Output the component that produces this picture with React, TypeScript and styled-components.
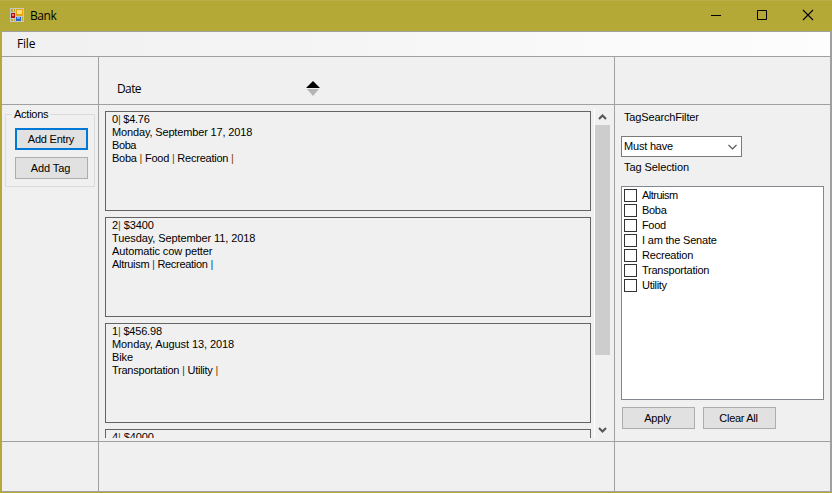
import React from 'react';
import styled, { createGlobalStyle } from 'styled-components';

const GlobalStyle = createGlobalStyle`
  * { box-sizing: border-box; }
  html, body { margin: 0; padding: 0; overflow: hidden; }
  button { font: inherit; color: inherit; }
`;

const Window = styled.div`
  width: 832px;
  height: 493px;
  display: flex;
  flex-direction: column;
  padding: 0 1px 1px;
  background: #b4a936;
  color: #000;
  font: 11px/13px "Liberation Sans", Arial, sans-serif;
  white-space: pre;
`;

const TitleBar = styled.header`
  height: 31px;
  margin: 0 -1px;
  flex: none;
  display: flex;
  align-items: center;
  padding: 0 1px 0 10px;
  border-top: 1px solid #b9ae48;
`;

const AppIconSvg = styled.svg`
  margin-bottom: 2px;
`;

const Title = styled.h1`
  margin: 0 auto 0 6px;
  font: 400 12px/16px "Open Sans", "Noto Sans", sans-serif;
  letter-spacing: -0.4px;
`;

const CaptionButton = styled.button`
  width: 46px;
  height: 30px;
  padding: 0;
  border: 0;
  background: none;
  display: flex;
  align-items: center;
  justify-content: center;
`;

const Client = styled.div`
  flex: 1;
  min-height: 0;
  display: flex;
  flex-direction: column;
  border: 1px solid #a0a0a0;
  background: #f0f0f0;
`;

const MenuBar = styled.nav`
  height: 24px;
  flex: none;
  padding: 4px 15px;
  background: linear-gradient(90deg, #f0f0f0, #fdfdfd);
  font: 12px/16px "Open Sans", "Noto Sans", sans-serif;
  letter-spacing: -0.2px;
`;

const Table = styled.main`
  flex: 1;
  min-height: 0;
  display: grid;
  grid-template-columns: 96px 515px 215px;
  grid-template-rows: 47px 336px 49px;
  gap: 1px;
  background: #a0a0a0;
  border-top: 1px solid #a0a0a0;
`;

const Cell = styled.section`
  min-width: 0;
  min-height: 0;
  background: #f0f0f0;
`;

const SortCell = styled(Cell)`
  display: flex;
  align-items: flex-start;
  padding: 24px 0 0 18px;
  font: 12px/16px "Open Sans", "Noto Sans", sans-serif;
`;

const SortLabel = styled.span`
  width: 189px;
  letter-spacing: -0.6px;
`;

const ActionsCell = styled(Cell)`
  padding: 3px 3px 0;
`;

const ActionsGroup = styled.fieldset`
  height: 79px;
  margin: 0;
  padding: 7px 7px 0 9px;
  border: 1px solid #dcdcdc;
  display: flex;
  flex-direction: column;
  gap: 7px;
  min-width: 0;

  legend {
    height: 13px;
    padding: 0 2px;
    margin-left: -3px;
    letter-spacing: -0.25px;
  }
`;

const Button = styled.button<{ $primary?: boolean }>`
  width: 73px;
  height: 22px;
  flex: none;
  padding: 0 ${(p) => (p.$primary ? 1 : 2)}px 0 0;
  background: #e1e1e1;
  border: ${(p) => (p.$primary ? '2px solid #0078d7' : '1px solid #adadad')};
`;

const Spaced = styled.span<{ $ls?: number }>`
  letter-spacing: ${(p) => p.$ls ?? 0}px;
`;

const EntriesCell = styled(Cell)`
  display: flex;
  padding: 3px 4px 3px 6px;
`;

const EntryList = styled.div`
  width: 489px;
  padding-top: 3px;
  overflow: hidden;
  display: flex;
  flex-direction: column;
  gap: 6px;
`;

const EntryCard = styled.article`
  width: 486px;
  height: 100px;
  flex: none;
  padding: 1px 6px;
  border: 1px solid #646464;
`;

const EntryLine = styled.div<{ $ls?: number }>`
  height: 13px;
  letter-spacing: ${(p) => p.$ls ?? 0}px;
`;

const Divider = styled.span<{ $warm: boolean }>`
  color: ${(p) => (p.$warm ? '#8a4200' : '#00508c')};
`;

const ScrollBar = styled.div`
  width: 16px;
  display: flex;
  flex-direction: column;
  align-items: center;
  justify-content: space-between;
  border-left: 1px solid #fff;
`;

const ScrollArrow = styled.div`
  height: 17px;
  display: flex;
  align-items: center;
`;

const ScrollTrack = styled.div`
  flex: 1;
  width: 15px;
`;

const ScrollThumb = styled.div`
  height: 230px;
  background: #cdcdcd;
`;

const FilterCell = styled(Cell)`
  padding: 6px 6px 0;
`;

const FieldLabel = styled.div`
  height: 13px;
  padding-left: 3px;
`;

const ComboBox = styled.div`
  width: 121px;
  height: 21px;
  margin: 12px 0 4px;
  padding: 0 4px 0 2px;
  display: flex;
  align-items: center;
  justify-content: space-between;
  background: #fff;
  border: 1px solid #7a7a7a;
`;

const TagList = styled.ul`
  width: 203px;
  height: 214px;
  margin: 12px 0 7px;
  padding: 1px 2px;
  list-style: none;
  background: #fff;
  border: 1px solid #828790;
`;

const TagItem = styled.li`
  height: 15px;
  display: flex;
  align-items: center;
  gap: 5px;
`;

const CheckBox = styled.span`
  width: 13px;
  height: 13px;
  border: 1px solid #333;
  background: #fff;
`;

const ButtonRow = styled.div`
  display: flex;
  gap: 8px;
  padding-left: 1px;
`;

type Line = { text: string; ls: number; warm?: boolean[] };

const entries: Line[][] = [
  [
    { text: '0| $4.76', ls: -0.25, warm: [true] },
    { text: 'Monday, September 17, 2018', ls: -0.15 },
    { text: 'Boba', ls: -0.4 },
    { text: 'Boba | Food | Recreation |', ls: -0.24, warm: [true, true, true] },
  ],
  [
    { text: '2| $3400', ls: -0.12, warm: [true] },
    { text: 'Tuesday, September 11, 2018', ls: -0.1 },
    { text: 'Automatic cow petter', ls: -0.12 },
    { text: 'Altruism | Recreation |', ls: -0.3, warm: [false, false] },
  ],
  [
    { text: '1| $456.98', ls: -0.2, warm: [true] },
    { text: 'Monday, August 13, 2018', ls: -0.08 },
    { text: 'Bike', ls: -0.1 },
    { text: 'Transportation | Utility |', ls: -0.24, warm: [false, true] },
  ],
  [{ text: '4| $4000', ls: -0.12, warm: [true] }],
];

const tags: Line[] = [
  { text: 'Altruism', ls: -0.5 },
  { text: 'Boba', ls: -0.3 },
  { text: 'Food', ls: -0.35 },
  { text: 'I am the Senate', ls: -0.2 },
  { text: 'Recreation', ls: -0.2 },
  { text: 'Transportation', ls: -0.24 },
  { text: 'Utility', ls: -0.3 },
];

const EntryText = ({ text, ls, warm = [] }: Line) => (
  <EntryLine $ls={ls}>
    {text.split('|').map((part, i) => (
      <React.Fragment key={i}>
        {i > 0 && <Divider $warm={warm[i - 1]}>|</Divider>}
        {part}
      </React.Fragment>
    ))}
  </EntryLine>
);

const AppIcon = () => (
  <AppIconSvg width="14" height="14" viewBox="0 0 14 14" shapeRendering="crispEdges">
    <path fill="#c9c9c4" d="M0 0h14v14H0z" />
    <path fill="#b4a936" d="M1 1h2v3H1zM4 1h1v3H4zM1 11h2v2H1zM4 11h1v2H4zM12 9h1v4h-1z" />
    <path fill="#b01116" d="M1 5h4v5H1z" />
    <path fill="#f27d72" d="M2 6h2v2H2z" />
    <path fill="#e8a317" d="M6 1h7v7H6z" />
    <path fill="#ffdf78" d="M7 2h5v4H7z" />
    <path fill="#2864cc" d="M6 9h5v4H6z" />
    <path fill="#76aaf5" d="M7 9h3v2H7z" />
  </AppIconSvg>
);

const Chevron = ({ up, wide }: { up?: boolean; wide?: boolean }) => (
  <svg width="9" height="6" viewBox="0 0 9 6" fill="none" stroke="#555" strokeWidth={wide ? 1.1 : 2}>
    <path d={up ? 'M1 5l3.5-3.5L8 5' : wide ? 'M.5 1l4 4 4-4' : 'M1 1l3.5 3.5L8 1'} />
  </svg>
);

export default function App() {
  return (
    <>
      <GlobalStyle />
      <Window>
        <TitleBar>
          <AppIcon />
          <Title>Bank</Title>
          <CaptionButton aria-label="Minimize">
            <svg width="10" height="10" shapeRendering="crispEdges"><path d="M0 4h10v1H0z" /></svg>
          </CaptionButton>
          <CaptionButton aria-label="Maximize">
            <svg width="10" height="10" viewBox="0 1 10 10" overflow="visible" fill="none" stroke="#000"><path d="M.5.5h9v9h-9z" /></svg>
          </CaptionButton>
          <CaptionButton aria-label="Close">
            <svg width="10" height="10" viewBox="0 1 10 10" overflow="visible" stroke="#000" strokeWidth="1.1"><path d="M0 0l10 10M10 0L0 10" /></svg>
          </CaptionButton>
        </TitleBar>
        <Client>
          <MenuBar>File</MenuBar>
          <Table>
            <Cell />
            <SortCell>
              <SortLabel>Date</SortLabel>
              <svg width="14" height="15" viewBox="0 0 14 15">
                <path d="M0 7L7 0l7 7z" />
                <path d="M1 8h12l-6 7z" fill="#b4b4b4" />
              </svg>
            </SortCell>
            <Cell />
            <ActionsCell>
              <ActionsGroup>
                <legend>Actions</legend>
                <Button $primary><Spaced $ls={-0.22}>Add Entry</Spaced></Button>
                <Button><Spaced $ls={-0.1}>Add Tag</Spaced></Button>
              </ActionsGroup>
            </ActionsCell>
            <EntriesCell>
              <EntryList>
                {entries.map((lines) => (
                  <EntryCard key={lines[0].text}>
                    {lines.map((line) => (
                      <EntryText key={line.text} {...line} />
                    ))}
                  </EntryCard>
                ))}
              </EntryList>
              <ScrollBar>
                <ScrollArrow><Chevron up /></ScrollArrow>
                <ScrollTrack><ScrollThumb /></ScrollTrack>
                <ScrollArrow><Chevron /></ScrollArrow>
              </ScrollBar>
            </EntriesCell>
            <FilterCell>
              <FieldLabel><Spaced $ls={-0.15}>TagSearchFilter</Spaced></FieldLabel>
              <ComboBox>
                <Spaced $ls={-0.2}>Must have</Spaced>
                <Chevron wide />
              </ComboBox>
              <FieldLabel><Spaced $ls={-0.08}>Tag Selection</Spaced></FieldLabel>
              <TagList>
                {tags.map(({ text, ls }) => (
                  <TagItem key={text}><CheckBox /><Spaced $ls={ls}>{text}</Spaced></TagItem>
                ))}
              </TagList>
              <ButtonRow>
                <Button><Spaced $ls={-0.2}>Apply</Spaced></Button>
                <Button><Spaced $ls={-0.3}>Clear All</Spaced></Button>
              </ButtonRow>
            </FilterCell>
            <Cell />
            <Cell />
            <Cell />
          </Table>
        </Client>
      </Window>
    </>
  );
}
